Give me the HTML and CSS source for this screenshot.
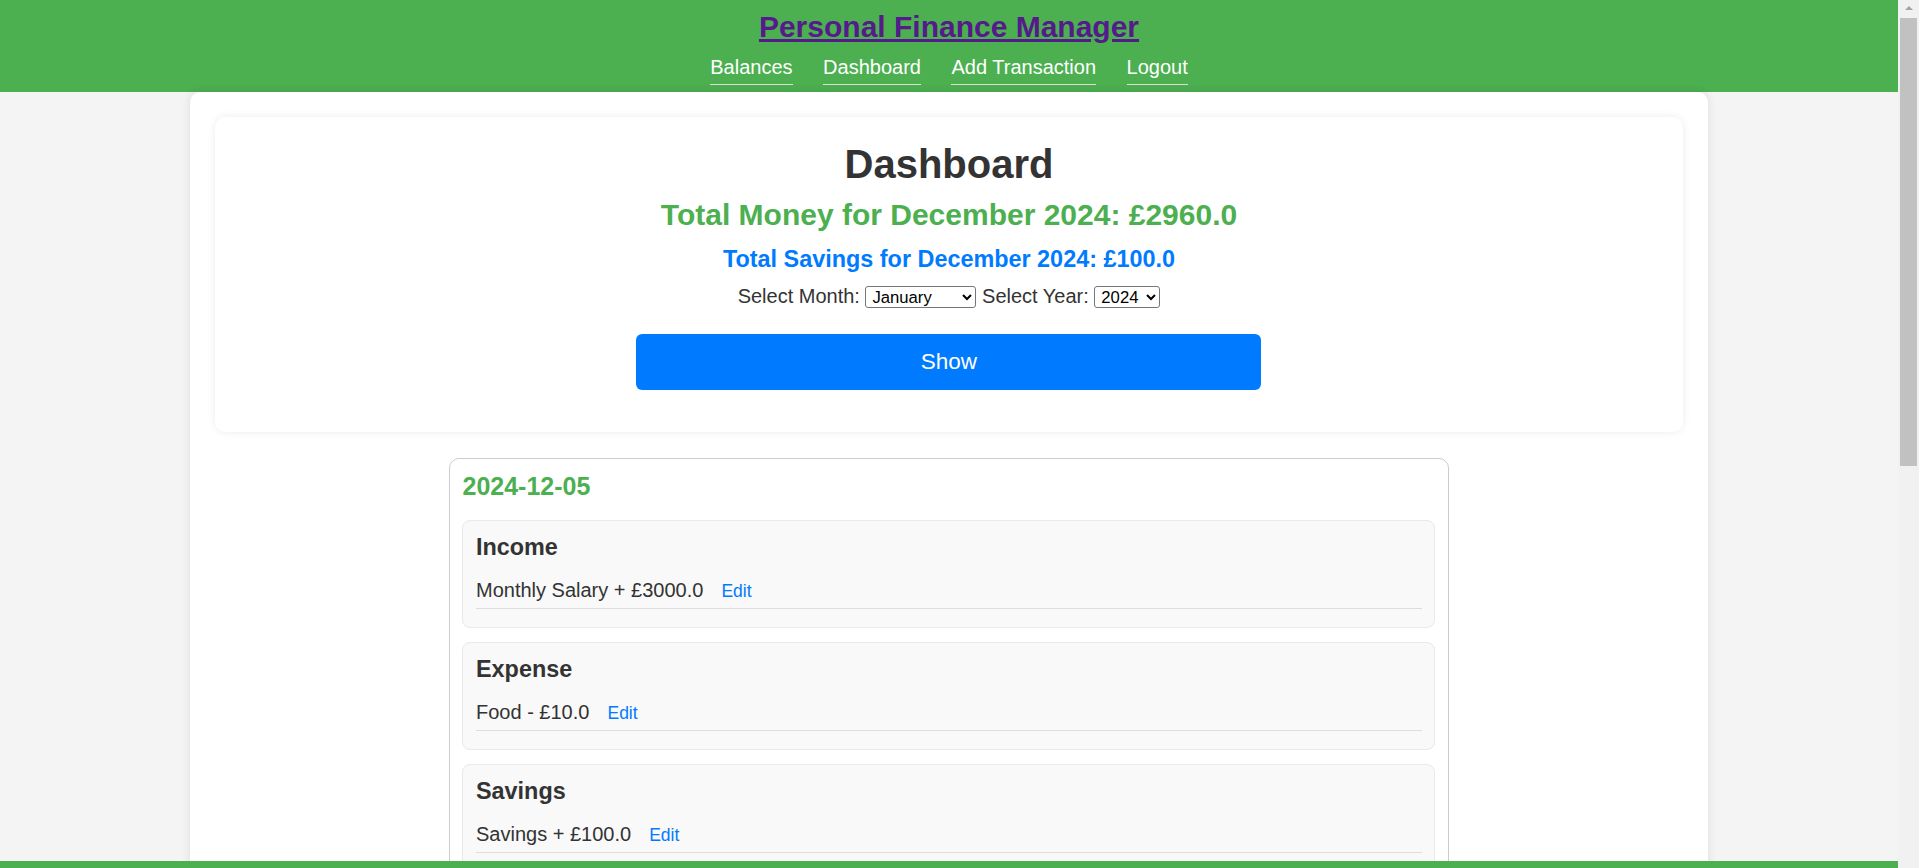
FILE: index.html
```html
<!DOCTYPE html>
<html lang="en">
<head>
<meta charset="utf-8">
<title>Dashboard - Personal Finance Manager</title>
<link rel="stylesheet" href="styles.css">
</head>
<body>
<div class="viewport">
  <header class="site-header">
    <h1 class="site-title"><a href="#">Personal Finance Manager</a></h1>
    <nav class="nav">
      <a href="#">Balances</a>
      <a href="#">Dashboard</a>
      <a href="#">Add Transaction</a>
      <a href="#">Logout</a>
    </nav>
  </header>

  <main class="container">
    <section class="summary">
      <h1 class="page-title">Dashboard</h1>
      <h2 class="total-money">Total Money for December 2024: £2960.0</h2>
      <h3 class="total-savings">Total Savings for December 2024: £100.0</h3>
      <form class="filter">
        <div class="filter-row">
          <label for="month">Select Month:</label>
          <select id="month" class="sel-month">
            <option>January</option><option>February</option><option>March</option>
            <option>April</option><option>May</option><option>June</option>
            <option>July</option><option>August</option><option>September</option>
            <option>October</option><option>November</option><option>December</option>
          </select>
          <label for="year">Select Year:</label>
          <select id="year" class="sel-year">
            <option>2024</option><option>2023</option>
          </select>
        </div>
        <button type="button" class="show-btn">Show</button>
      </form>
    </section>

    <div class="day-card">
      <h3 class="day-date">2024-12-05</h3>
      <div class="group">
        <h3 class="group-title">Income</h3>
        <div class="item">Monthly Salary + £3000.0 <a href="#" class="edit">Edit</a></div>
      </div>
      <div class="group">
        <h3 class="group-title">Expense</h3>
        <div class="item">Food - £10.0 <a href="#" class="edit">Edit</a></div>
      </div>
      <div class="group">
        <h3 class="group-title">Savings</h3>
        <div class="item">Savings + £100.0 <a href="#" class="edit">Edit</a></div>
      </div>
    </div>
  </main>

  <footer class="site-footer"></footer>
</div>
<div class="scrollbar">
  <div class="sb-arrow"></div>
  <div class="sb-thumb"></div>
</div>
</body>
</html>
```

FILE: styles.css
```css
html, body {
  margin: 0;
  padding: 0;
  height: 100%;
  overflow: hidden;
}

body {
  display: flex;
  font-family: "Liberation Sans", Arial, sans-serif;
  font-size: 20px;
  color: #333;
  background: #f4f4f4;
}

.viewport {
  flex: 1;
  height: 100vh;
  overflow: hidden;
  position: relative;
  background: #f4f4f4;
}

/* Header */
.site-header {
  background: #4caf50;
  text-align: center;
  padding: 10px 0 7.5px;
}

.site-title {
  margin: 0 0 11.5px;
  font-size: 30px;
  font-weight: bold;
  line-height: normal;
}

.site-title a {
  color: #551a8b;
  text-decoration: underline;
}

.nav {
  font-size: 20px;
  line-height: normal;
}

.nav a {
  display: inline-block;
  color: #fff;
  text-decoration: none;
  margin: 0 12.5px;
  padding-bottom: 5px;
  border-bottom: 1px solid #ddd;
}

/* Main container */
.container {
  width: 80%;
  margin: 0 auto;
  padding: 25px;
  box-sizing: border-box;
  background: #fff;
  border-radius: 10px;
  box-shadow: 0 0 10px rgba(0, 0, 0, 0.1);
  min-height: 1600px;
}

.summary {
  text-align: center;
  padding: 25px;
  border-radius: 10px;
  box-shadow: 0 0 8px rgba(0, 0, 0, 0.08);
  margin-bottom: 26px;
}

.page-title {
  margin: 0 0 10.5px;
  font-size: 40px;
  line-height: normal;
  color: #333;
}

.total-money {
  margin: 0 0 14.8px;
  font-size: 30px;
  line-height: normal;
  color: #4caf50;
}

.total-savings {
  margin: 0 0 11.5px;
  font-size: 23.4px;
  line-height: normal;
  color: #007bff;
}

.filter {
  margin: 0;
}

.filter-row {
  font-size: 20px;
  line-height: normal;
  color: #333;
}

.filter-row select {
  font-family: "Liberation Sans", Arial, sans-serif;
  font-size: 16.67px;
  height: 22.3px;
  box-sizing: border-box;
  border: 1px solid #767676;
  border-radius: 3px;
  background: #fff;
  color: #000;
  padding: 0 0 0 2px;
}

.sel-month {
  width: 111px;
}

.sel-year {
  width: 66px;
}

.show-btn {
  display: block;
  width: 625px;
  height: 56px;
  margin: 25.6px auto 17.5px;
  border: none;
  border-radius: 6px;
  background: #007bff;
  color: #fff;
  font-family: "Liberation Sans", Arial, sans-serif;
  font-size: 22.5px;
  cursor: pointer;
}

/* Day card */
.day-card {
  width: 1000px;
  box-sizing: border-box;
  margin: 0 auto;
  padding: 12.5px;
  border: 1px solid #ccc;
  border-radius: 10px;
  background: #fff;
}

.day-date {
  margin: 0 0 19.5px;
  font-size: 25px;
  line-height: normal;
  color: #4caf50;
}

.group {
  background: #f9f9f9;
  border: 1px solid #e9e9e9;
  border-radius: 8px;
  padding: 12.5px;
  margin-bottom: 14px;
}

.group-title {
  margin: 0 0 10.5px;
  font-size: 23.4px;
  line-height: normal;
  color: #333;
}

.item {
  padding: 7.5px 0 6.5px;
  margin-bottom: 5.5px;
  border-bottom: 1px solid #ddd;
  font-size: 20px;
  line-height: normal;
  color: #333;
}

.edit {
  margin-left: 12.5px;
  font-size: 17.5px;
  color: #007bff;
  text-decoration: none;
}

/* Fixed footer strip */
.site-footer {
  position: absolute;
  left: 0;
  right: 0;
  bottom: 0;
  height: 7.5px;
  background: #4caf50;
}

/* Scrollbar column */
.scrollbar {
  width: 21px;
  height: 100vh;
  background: #f1f1f1;
  display: flex;
  flex-direction: column;
  align-items: center;
}

.sb-arrow {
  margin-top: 6px;
  width: 0;
  height: 0;
  border-left: 4.5px solid transparent;
  border-right: 4.5px solid transparent;
  border-bottom: 4.5px solid #a3a3a3;
}

.sb-thumb {
  margin-top: 7.5px;
  width: 17px;
  height: 448px;
  background: #c1c1c1;
}
```
